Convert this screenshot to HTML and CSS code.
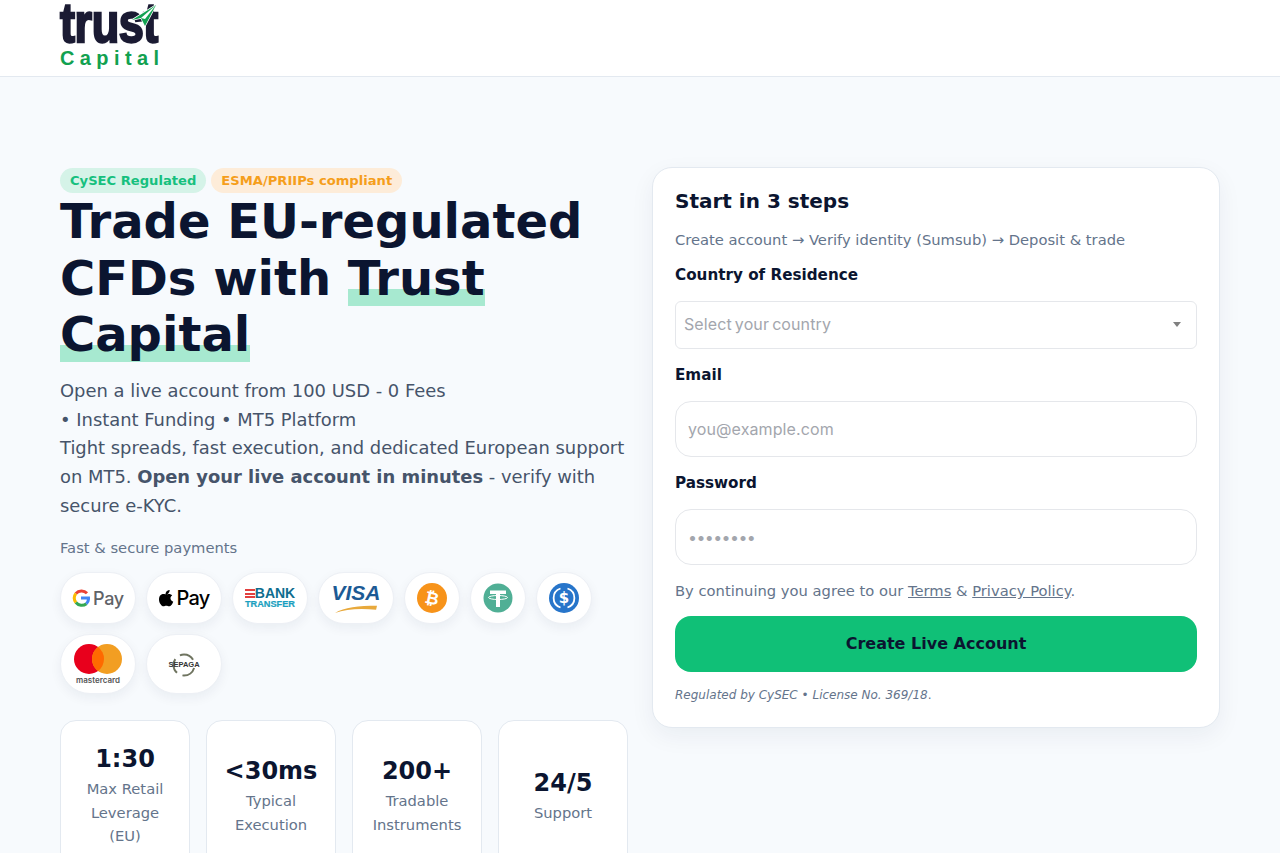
FILE: index.html
```html
<!DOCTYPE html>
<html lang="en">
<head>
  <meta charset="UTF-8" />
  <meta name="viewport" content="width=device-width, initial-scale=1" />
  <title>Trust Capital - Live Account</title>
  <link rel="stylesheet" href="styles.css">
</head>
<body>
  <header class="site-header">
    <a class="logo" href="#">
      <span class="logo-mark">
        <span class="logo-word">trust</span>
        <svg class="logo-arrow" viewBox="0 0 26 22" width="26" height="22">
          <path d="M25 0 L1 15 L10 13 L14 21 Z" fill="#12a150" stroke="#fff" stroke-width="1.500" paint-order="stroke" />
          <path d="M10 13 L25 0 L14 14 Z" fill="#fff" />
        </svg>
      </span>
      <span class="logo-sub">Capital</span>
    </a>
  </header>

  <main class="hero">
    <section class="hero-left">
      <div class="badges">
        <span class="badge badge-green">CySEC Regulated</span>
        <span class="badge badge-orange">ESMA/PRIIPs compliant</span>
      </div>
      <h1>Trade EU-regulated CFDs with <span class="mark">Trust Capital</span></h1>
      <p class="lead">
        Open a live account from 100 USD - 0 Fees<br>
        • Instant Funding • MT5 Platform<br>
        Tight spreads, fast execution, and dedicated European support on MT5. <strong>Open your live account in minutes</strong> - verify with secure e-KYC.
      </p>

      <div class="pay-title">Fast &amp; secure payments</div>
      <div class="pay-list">
        <div class="pay">
          <svg class="g-logo" viewBox="0 0 24 24" width="18" height="18">
            <path d="M20 5.600A10 10 0 0 0 5.200 6" fill="none" stroke="#ea4335" stroke-width="4" />
            <path d="M5.200 6a10 10 0 0 0 0 12" fill="none" stroke="#fbbc04" stroke-width="4" />
            <path d="M5.200 18a10 10 0 0 0 14 1.600" fill="none" stroke="#34a853" stroke-width="4" />
            <path d="M19.200 19.600A10 10 0 0 0 22 12H12" fill="none" stroke="#4285f4" stroke-width="4" />
          </svg>
          <span class="gpay-text">Pay</span>
        </div>
        <div class="pay">
          <svg viewBox="0 0 24 28" width="15" height="18">
            <path d="M17 1c.2 2.200-.7 4-1.800 5.200-1.200 1.300-3 2.300-4.700 2.100-.2-2 .8-4 1.800-5.100C13.500 1.900 15.500 1 17 1zM22.800 20c-.8 1.900-1.200 2.700-2.200 4.300-1.400 2.200-3.400 3-4.700 3-1.500 0-2.300-.9-4.300-.9s-2.900.9-4.400.9c-1.800 0-3.200-1.200-4.600-3.300C-1 19.500-.6 12.600 2.300 9.600c1.400-1.500 3.300-2.200 5-2.200 1.800 0 3 1 4.500 1 1.400 0 2.400-1 4.500-1 1.600 0 3.500.8 4.800 2.500-4.200 2.500-3.500 8.500 1.700 10.100z" fill="#000" />
          </svg>
          <span class="apay-text">Pay</span>
        </div>
        <div class="pay">
          <div class="bank">
            <div class="bank-top"><span class="bank-lines"></span>BANK</div>
            <div class="bank-bottom">TRANSFER</div>
          </div>
        </div>
        <div class="pay">
          <div class="visa">
            <span class="visa-text">VISA</span>
            <svg class="visa-swoosh" viewBox="0 0 46 10" width="42" height="8" preserveAspectRatio="none">
              <path d="M0 10 C10 3 26 1 46 1 L45 6 C28 4 12 5 0 10 Z" fill="#e8a93c" />
            </svg>
          </div>
        </div>
        <div class="pay pay-round">
          <span class="coin coin-btc"><span class="btc-sign">₿</span></span>
        </div>
        <div class="pay pay-round">
          <svg viewBox="0 0 30 30" width="30" height="30">
            <circle cx="15" cy="15" r="14.500" fill="#50af95" />
            <path d="M7 7.500H23V11H17V24H13V11H7Z" fill="#fff" />
            <ellipse cx="15" cy="14.500" rx="9.500" ry="2" fill="none" stroke="#fff" stroke-width="1" />
          </svg>
        </div>
        <div class="pay pay-round">
          <div class="usdc">
            <svg viewBox="0 0 30 30" width="30" height="30">
              <circle cx="15" cy="15" r="15" fill="#2775ca" />
              <path d="M11.500 5.500a10 10 0 0 0 0 19" fill="none" stroke="#fff" stroke-width="1.800" />
              <path d="M18.500 5.500a10 10 0 0 1 0 19" fill="none" stroke="#fff" stroke-width="1.800" />
            </svg>
            <span class="usdc-sign">$</span>
          </div>
        </div>
        <div class="pay pay-tall">
          <div class="mc">
            <svg viewBox="0 0 48 30" width="48" height="30">
              <circle cx="15" cy="15" r="15" fill="#e8001c" />
              <circle cx="33" cy="15" r="15" fill="#f29e22" />
              <path d="M24 3a15 15 0 0 1 0 24a15 15 0 0 1 0-24z" fill="#ff6a00" />
            </svg>
            <span class="mc-text">mastercard</span>
          </div>
        </div>
        <div class="pay pay-tall">
          <div class="sepa">
            <svg viewBox="0 0 24 24" width="24" height="24">
              <circle cx="12" cy="12" r="10.500" fill="none" stroke="#6f7460" stroke-width="2" stroke-dasharray="15 6" stroke-dashoffset="-3" />
            </svg>
            <span class="sepa-text">SEPAGA</span>
          </div>
        </div>
      </div>

      <div class="stats">
        <div class="stat">
          <div class="stat-value">1:30</div>
          <div class="stat-label">Max Retail Leverage (EU)</div>
        </div>
        <div class="stat">
          <div class="stat-value">&lt;30ms</div>
          <div class="stat-label">Typical Execution</div>
        </div>
        <div class="stat">
          <div class="stat-value">200+</div>
          <div class="stat-label">Tradable Instruments</div>
        </div>
        <div class="stat">
          <div class="stat-value">24/5</div>
          <div class="stat-label">Support</div>
        </div>
      </div>
    </section>

    <section class="form-card">
      <h2>Start in 3 steps</h2>
      <p class="steps">Create account → Verify identity (Sumsub) → Deposit &amp; trade</p>
      <form>
        <label for="country">Country of Residence</label>
        <div class="select-wrap">
          <select id="country" name="country">
            <option>Select your country</option>
          </select>
          <span class="select-arrow"></span>
        </div>

        <label for="email">Email</label>
        <input type="email" id="email" name="email" placeholder="you@example.com">

        <label for="password">Password</label>
        <input class="input-pass" type="password" id="password" name="password" placeholder="••••••••">

        <p class="terms">By continuing you agree to our <a href="#">Terms</a> &amp; <a href="#">Privacy Policy</a>.</p>
        <button type="submit">Create Live Account</button>
        <p class="legal"><em>Regulated by CySEC • License No. 369/18</em>.</p>
      </form>
    </section>
  </main>
</body>
</html>
```

FILE: styles.css
```css
* {
  box-sizing: border-box;
}

body {
  margin: 0;
  font-family: "DejaVu Sans", sans-serif;
  background-color: #f7fafd;
  color: #0b1530;
}

.site-header {
  height: 77px;
  padding: 0 60px;
  background-color: #fff;
  border-bottom: 1px solid #e3e9f0;
}

.logo {
  display: inline-flex;
  flex-direction: column;
  text-decoration: none;
}

.logo-mark {
  position: relative;
  display: block;
  height: 47px;
  padding-top: 6px;
}

.logo-word {
  display: block;
  font-family: "Liberation Sans", sans-serif;
  font-size: 48px;
  font-weight: 700;
  line-height: 40px;
  letter-spacing: -0.5px;
  color: #1b1b33;
  -webkit-text-stroke: 2px #1b1b33;
  transform: scale(0.94, 1.17);
  transform-origin: 0 36.600px;
}

.logo-arrow {
  position: absolute;
  top: 5px;
  left: 71px;
}

.logo-sub {
  font-family: "Liberation Sans", sans-serif;
  font-size: 20px;
  font-weight: 700;
  line-height: 23px;
  letter-spacing: 5.400px;
  color: #12a150;
}

.hero {
  display: grid;
  grid-template-columns: 568px 568px;
  gap: 24px;
  padding: 90px 60px 40px;
  align-items: start;
}

.badges {
  display: flex;
  gap: 5px;
  margin-top: 1px;
}

.badge {
  padding: 0 10px;
  border-radius: 999px;
  font-size: 13.120px;
  font-weight: 700;
  line-height: 25px;
}

.badge-green {
  background-color: #d5f3e8;
  color: #16c07e;
}

.badge-orange {
  background-color: #fdecd9;
  color: #f59e1b;
}

h1 {
  margin: 0 0 14px;
  font-size: 48px;
  font-weight: 700;
  line-height: 1.18;
  color: #0b1530;
}

.mark {
  background-image: linear-gradient(transparent 70%, #a7e9d0 70%);
}

.lead {
  margin: 0 0 18px;
  font-size: 17.920px;
  line-height: 1.6;
  color: #46546a;
}

.pay-title {
  margin-bottom: 14px;
  font-size: 14.720px;
  line-height: 20px;
  color: #64748b;
}

.pay-list {
  display: flex;
  flex-wrap: wrap;
  gap: 10px;
  align-items: flex-start;
}

.pay {
  display: flex;
  align-items: center;
  justify-content: center;
  gap: 3px;
  width: 76px;
  height: 52px;
  background-color: #fff;
  border: 1px solid #edf0f5;
  border-radius: 26px;
  box-shadow: 0 4px 12px rgba(15, 30, 60, 0.06);
}

.pay-round {
  width: 56px;
}

.pay-tall {
  height: 60px;
  border-radius: 30px;
}

.gpay-text {
  font-family: "Inter", sans-serif;
  font-size: 18px;
  font-weight: 500;
  letter-spacing: -0.3px;
  color: #5f6368;
}

.apay-text {
  font-family: "Inter", sans-serif;
  font-size: 20px;
  font-weight: 500;
  letter-spacing: -0.8px;
  color: #000;
}

.bank {
  font-family: "Liberation Sans", sans-serif;
  font-weight: 700;
  text-align: center;
  color: #0f6d8f;
}

.bank-top {
  display: flex;
  align-items: center;
  font-size: 14px;
  line-height: 12px;
}

.bank-lines {
  display: block;
  width: 10px;
  height: 9px;
  background-image: repeating-linear-gradient(#e2403f 0 2px, transparent 2px 3.500px);
}

.bank-bottom {
  font-size: 9.200px;
  line-height: 10px;
  color: #1b9fc0;
  -webkit-text-stroke: 0.2px #1b9fc0;
}

.visa {
  display: flex;
  flex-direction: column;
  align-items: center;
}

.visa-text {
  font-family: "Liberation Sans", sans-serif;
  font-size: 21px;
  font-style: italic;
  font-weight: 700;
  line-height: 20px;
  color: #1c5a94;
}

.visa-swoosh {
  margin-top: 2px;
}

.coin {
  display: flex;
  align-items: center;
  justify-content: center;
  width: 30px;
  height: 30px;
  border-radius: 50%;
  font-weight: 700;
}

.coin-btc {
  background-color: #f7931a;
  color: #fff;
  font-size: 17px;
}

.btc-sign {
  transform: rotate(12deg);
}

.usdc {
  position: relative;
  width: 30px;
  height: 30px;
}

.usdc-sign {
  position: absolute;
  inset: 0;
  font-size: 15px;
  font-weight: 700;
  line-height: 30px;
  text-align: center;
  color: #fff;
}

.mc {
  display: flex;
  flex-direction: column;
  align-items: center;
  padding-top: 1px;
}

.mc-text {
  font-family: "Inter", sans-serif;
  font-size: 8px;
  font-weight: 600;
  line-height: 12px;
  color: #555;
}

.sepa {
  position: relative;
  display: flex;
  justify-content: center;
  width: 34px;
  height: 24px;
  margin-top: 2px;
}

.sepa-text {
  position: absolute;
  top: 7px;
  left: 0;
  width: 100%;
  font-family: "Liberation Sans", sans-serif;
  font-size: 7.500px;
  font-weight: 700;
  text-align: center;
  color: #333;
}

.stats {
  display: grid;
  grid-template-columns: repeat(4, 130px);
  gap: 16px;
  margin-top: 26px;
}

.stat {
  display: flex;
  flex-direction: column;
  justify-content: center;
  padding: 22px 16px;
  background-color: #fff;
  border: 1px solid #e3e9f0;
  border-radius: 16px;
  text-align: center;
}

.stat-value {
  margin-bottom: 2px;
  font-size: 24px;
  font-weight: 700;
  line-height: 32px;
  color: #0b1530;
}

.stat-label {
  font-size: 14.720px;
  line-height: 1.6;
  color: #64748b;
}

.form-card {
  padding: 21px 22px 23px;
  background-color: #fff;
  border: 1px solid #e3e9f0;
  border-radius: 20px;
  box-shadow: 0 8px 24px rgba(15, 30, 60, 0.06);
}

h2 {
  margin: 0 0 15px;
  font-size: 20px;
  font-weight: 700;
  line-height: 24px;
  color: #0b1530;
}

.steps {
  margin: 0 0 13px;
  font-size: 14.720px;
  line-height: 24px;
  color: #64748b;
}

label {
  display: block;
  margin-bottom: 16px;
  font-size: 15.200px;
  font-weight: 700;
  line-height: 20px;
  color: #0b1530;
}

.select-wrap {
  position: relative;
  margin-bottom: 16px;
}

select {
  display: block;
  width: 100%;
  height: 48px;
  padding: 0 8px 2px;
  background-color: #fff;
  border: 1px solid #e5e7eb;
  border-radius: 6px;
  font-family: "Inter", sans-serif;
  font-size: 16px;
  letter-spacing: 0.1px;
  word-spacing: -1.500px;
  color: #a3a6ad;
  appearance: none;
}

.select-arrow {
  position: absolute;
  top: 21px;
  right: 16px;
  border-left: 4px solid transparent;
  border-right: 4px solid transparent;
  border-top: 5px solid #808080;
}

input {
  display: block;
  width: 100%;
  height: 56px;
  margin-bottom: 16px;
  padding: 0 12px;
  background-color: #fff;
  border: 1px solid #e5e7eb;
  border-radius: 16px;
  font-family: "Inter", sans-serif;
  font-size: 16px;
  letter-spacing: 0.1px;
}

input::placeholder {
  color: #a3a6ad;
  opacity: 1;
}

.input-pass {
  margin-bottom: 15px;
  letter-spacing: -0.6px;
}

.terms {
  margin: 0 0 14px;
  font-size: 14.720px;
  line-height: 22px;
  color: #64748b;
}

.terms a {
  color: #64748b;
}

button {
  display: block;
  width: 100%;
  height: 56px;
  padding-bottom: 2px;
  border: none;
  border-radius: 16px;
  background-color: #10c077;
  font-family: "DejaVu Sans", sans-serif;
  font-size: 16px;
  font-weight: 700;
  color: #0b1530;
  cursor: pointer;
}

.legal {
  margin: 14px 0 0;
  font-size: 12px;
  line-height: 18px;
  color: #64748b;
}
```
